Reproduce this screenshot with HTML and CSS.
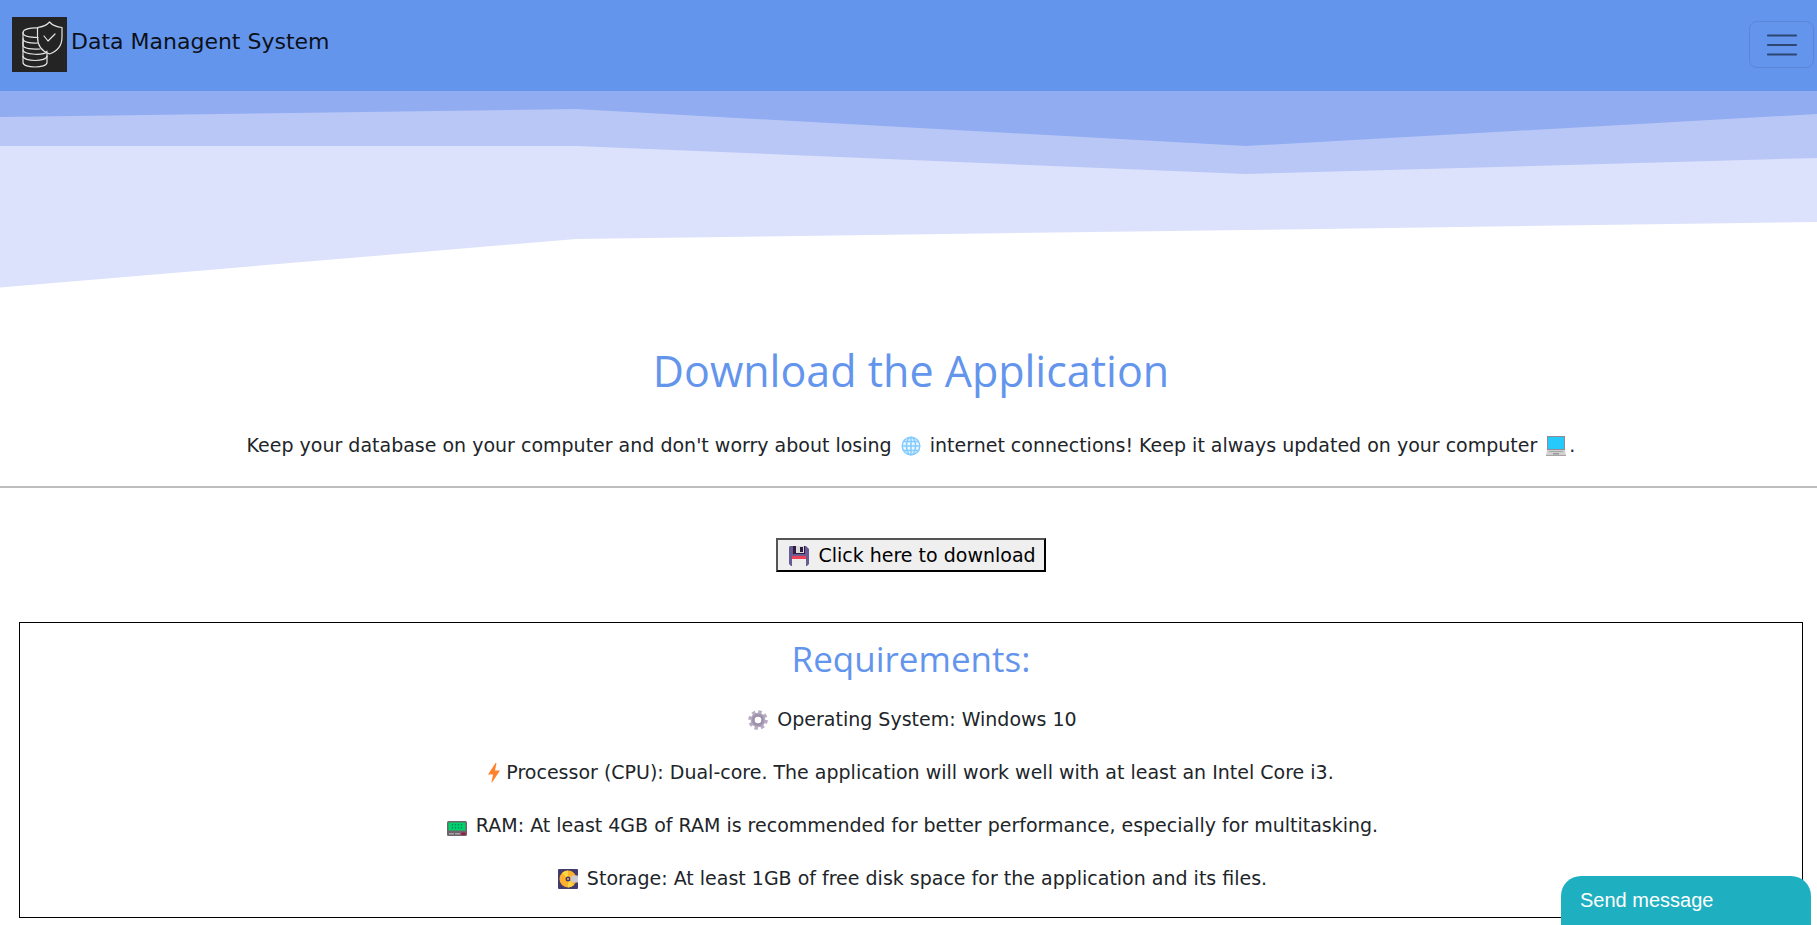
FILE: index.html
```html
<!DOCTYPE html>
<html lang="en">
<head>
<meta charset="utf-8">
<title>Data Managent System</title>
<meta name="viewport" content="width=device-width, initial-scale=1">
<link rel="stylesheet" href="styles.css">
</head>
<body>
<header class="navbar">
  <a class="brand" href="#">
    <svg class="logo" viewBox="0 0 55 55" aria-hidden="true">
      <rect width="55" height="55" fill="#242424"/>
      <g fill="none" stroke="#e4e4e4" stroke-width="1.200" stroke-linecap="round" stroke-linejoin="round">
        <path d="M26 11c-8-.5-15 1.500-15 4.500v30c0 6 24 6 24 0V36"/>
        <path d="M11 15.500c0 4 8 5 15 5M11 21.500c0 4 8 5 15 4.500M11 24v4c0 4 10 4.500 17 4M11 33c0 5 24 6 24 1M11 39c0 6 24 6 24 0"/>
        <path d="M37.500 5C34 9 29 10 25.500 10.500V20c0 9 5 14.500 12 17 7-2.500 12.500-8 12.500-17v-9.500C45 10 41 9 37.500 5z"/>
        <path d="M32 19l4 5 7-7"/>
      </g>
    </svg>
    <span>Data Managent System</span>
  </a>
  <button class="menu-toggle" type="button" aria-label="Toggle navigation">
    <svg viewBox="0 0 34 34" aria-hidden="true"><path d="M3 7.500h28M3 17h28M3 26.500h28" stroke="#2d4672" stroke-width="2.200" stroke-linecap="round"/></svg>
  </button>
</header>
<svg class="waves" viewBox="0 0 1817 200" preserveAspectRatio="none" aria-hidden="true">
  <path fill="#dde2fc" d="M0 0H1817V131L1246 139 576 148 0 196.500z"/>
  <path fill="#b9c7f7" d="M0 0H1817V67L1246 83 576 55H0z"/>
  <path fill="#91acf1" d="M0 0H1817V23L1246 55 576 18 0 26z"/>
</svg>
<main>
  <section class="intro">
    <h1>Download the Application</h1>
    <p>Keep your database on your computer and don't worry about losing
      <svg class="icon" viewBox="0 0 20 20" aria-hidden="true"><circle cx="10" cy="10" r="9" fill="#e8f6ff"/><g fill="none" stroke="#83cbff" stroke-width="1.500"><circle cx="10" cy="10" r="8.800"/><ellipse cx="10" cy="10" rx="4.500" ry="8.800"/><path d="M10 1v18M1 10h18M2.500 5.500h15M2.500 14.500h15"/></g></svg>
      internet connections! Keep it always updated on your computer
      <svg class="icon" viewBox="0 0 20 20" aria-hidden="true"><path fill="#8f8a94" d="M1 0h18v14H1z"/><path fill="#26c9fc" d="M2 1h16v12H2z"/><path fill="#d0d0d0" d="M1 14h18l1 6H0z"/><path stroke="#a5a5a5" d="M3 15.500h14M0 19.500h20"/><path fill="#999" d="M7 17h6v1.500H7z"/></svg>.</p>
  </section>
  <hr>
  <div class="action">
    <button class="download" type="button">
      <svg class="icon" viewBox="0 0 20 20" aria-hidden="true"><path fill="#6b5b95" d="M1 0h16l3 3v15l-2 2H2l-2-2V1z"/><path fill="#321b41" d="M4 0h12v8H4z"/><path fill="#ddd" d="M7 0h8v7H7z"/><path fill="#321b41" d="M11 1h3v5h-3z"/><path fill="#eee" d="M3 10h14v10H3z"/><path fill="#ee4057" d="M3 10h14v3H3z"/></svg>
      Click here to download
    </button>
  </div>
  <section class="requirements">
    <h2>Requirements:</h2>
    <p><svg class="icon" viewBox="0 0 20 20" aria-hidden="true"><circle cx="10" cy="10" r="8.300" fill="none" stroke="#b9adc3" stroke-width="3" stroke-dasharray="3.500 3.020"/><circle cx="10" cy="10" r="5.300" fill="none" stroke="#9e91ab" stroke-width="4"/><circle cx="10" cy="10" r="6.500" fill="none" stroke="#baaec4" stroke-width="1"/></svg>
      Operating System: Windows 10</p>
    <p><svg class="bolt" viewBox="0 0 12 20" aria-hidden="true"><path fill="#ff822d" d="M7.500 0h1L7 7.500h5L4 19.500l-.500-.500L5 11.500H0z"/></svg>
      Processor (CPU): Dual-core. The application will work well with at least an Intel Core i3.</p>
    <p><svg class="icon" viewBox="0 0 20 20" aria-hidden="true"><rect y="5" width="20" height="15" rx="1.500" fill="#6f646d"/><path fill="#00d26a" d="M1.500 6.500h17v8h-17z"/><path stroke="#008463" stroke-width="1.300" stroke-dasharray="1.500 1.500" d="M5.500 8v6M8.500 8v6M11.500 8v6M14.500 8v6"/><path fill="#aaa0a6" d="M2 17h5v1.500H2zM8 17h5v1.500H8z"/><path fill="#a5123e" d="M14.500 16.500h4v2.500h-4z"/></svg>
      RAM: At least 4GB of RAM is recommended for better performance, especially for multitasking.</p>
    <p><svg class="icon" viewBox="0 0 20 20" aria-hidden="true"><rect width="20" height="20" rx="1" fill="#433b6b"/><circle cx="10" cy="10" r="8.500" fill="#ffb02e"/><path fill="#fcd53f" d="M10 10L4 4a8.500 8.500 0 0 1 6-2.500zM10 10l6 6a8.500 8.500 0 0 1-6 2.500z"/><circle cx="10" cy="10" r="2.500" fill="#433b6b"/><circle cx="10" cy="10" r="1" fill="#ffb02e"/><path fill="#cdc9cf" d="M20 6.500h-4a3.500 3.500 0 0 0 0 7h4z"/></svg>
      Storage: At least 1GB of free disk space for the application and its files.</p>
  </section>
</main>
<button class="chat" type="button">Send message</button>
</body>
</html>
```
FILE: styles.css
```css
* {
  box-sizing: border-box;
}

body {
  margin: 0;
  background: #fff;
  color: #212529;
  font-family: Verdana, "DejaVu Sans", sans-serif;
  font-size: 19px;
  line-height: 27px;
}

.navbar {
  display: flex;
  align-items: center;
  justify-content: space-between;
  padding: 17px 3px 19px 12px;
  background: #6495ed;
}

.brand {
  display: flex;
  gap: 4px;
  color: #0c1119;
  font-size: 22px;
  line-height: 50px;
  text-decoration: none;
}

.logo {
  width: 55px;
  height: 55px;
}

.menu-toggle {
  display: flex;
  align-items: center;
  justify-content: center;
  width: 65px;
  height: 47px;
  padding: 0;
  border: 1px solid #5a86d5;
  border-radius: 8px;
  background: none;
}

.menu-toggle svg {
  width: 34px;
  height: 34px;
}

.waves {
  display: block;
  width: 100%;
  height: 200px;
}

.intro {
  padding: 53px 0 27px 5px;
  text-align: center;
}

h1,
h2 {
  margin: 0;
  color: #6495ed;
  font-family: "Segoe UI", "Open Sans", sans-serif;
  font-weight: 400;
}

h1 {
  font-size: 43px;
  line-height: 54px;
}

p {
  margin: 0;
}

.intro p {
  margin-top: 34px;
}

.icon {
  width: 20px;
  height: 20px;
  margin: 0 3px;
  vertical-align: -4px;
}

.bolt {
  width: 12px;
  height: 20px;
  vertical-align: -4px;
}

hr {
  height: 2px;
  margin: 0;
  border: 0;
  background: #bdbdbd;
}

.action {
  display: flex;
  justify-content: center;
  padding: 50px 0 50px 5px;
}

.download {
  padding: 1px 8px;
  border: 2px solid;
  border-color: #555 #000 #000 #555;
  background: #efefef;
  color: #000;
  font: inherit;
  line-height: 28px;
}

.requirements {
  display: flex;
  flex-direction: column;
  gap: 26px;
  margin: 0 14px 5px 19px;
  padding: 15px 16px 25px;
  border: 1px solid #000;
  text-align: center;
}

h2 {
  font-size: 35px;
  line-height: 42px;
}

.chat {
  position: fixed;
  right: 6px;
  bottom: 0;
  width: 250px;
  height: 49px;
  padding: 0 19px;
  border: 0;
  border-radius: 20px 20px 0 0;
  background: #1eb0c0;
  color: #fff;
  font-family: Arial, "Liberation Sans", sans-serif;
  font-size: 20px;
  text-align: left;
}
```
